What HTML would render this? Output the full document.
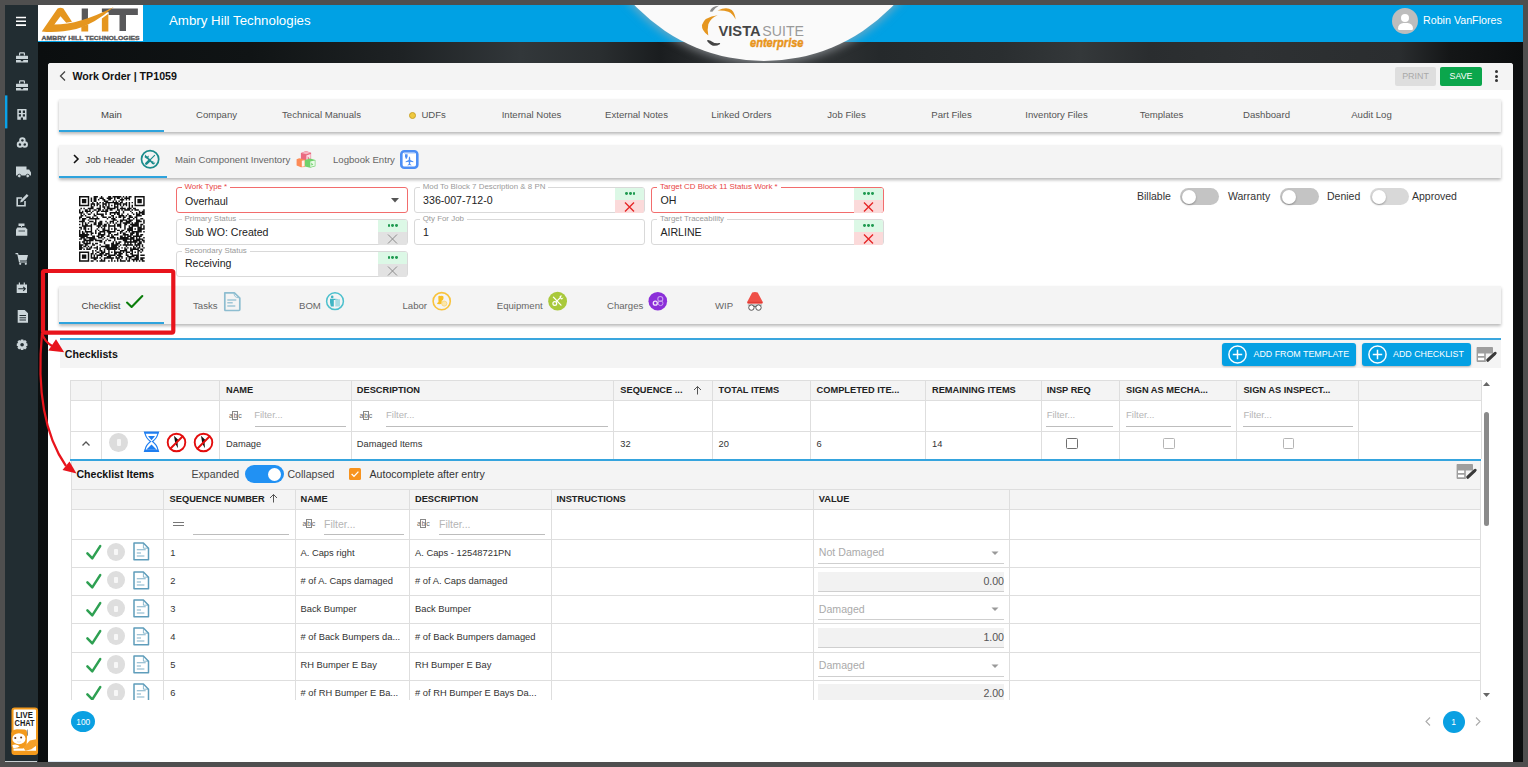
<!DOCTYPE html>
<html><head><meta charset="utf-8">
<style>
*{box-sizing:border-box;margin:0;padding:0}
html,body{width:1528px;height:767px;overflow:hidden;background:#4f4f4f;font-family:"Liberation Sans",sans-serif;color:#222}
.a{position:absolute}
.t{position:absolute;white-space:nowrap;line-height:1}
#side{left:5px;top:5px;width:33px;height:757px;background:#222d32}
#bg{left:38px;top:42px;width:1485px;height:720px;background:linear-gradient(90deg,#0b0e0f 0.0%,#101415 14.3%,#1e2224 24.4%,#32373a 32.5%,#2a2e30 37.8%,#1a1d1f 41.9%,#3a3d3f 48.6%,#25292b 56.7%,#2a2e30 64.8%,#34383a 70.2%,#2a2d2f 74.9%,#2e3133 81.6%,#2a2d2f 91.7%,#141617 95.1%,#0c0e0f 100.0%)}
#hdr{left:38px;top:5px;width:1485px;height:37px;background:#00a1e4}
#card{left:48px;top:63px;width:1465px;height:699px;background:#fff;border-radius:3px 3px 0 0}
.bar{position:absolute;background:#f4f4f4;box-shadow:0 2px 3px rgba(0,0,0,.28)}
.tab{position:absolute;top:0;height:100%;text-align:center;color:#555;font-size:9.6px}
.uline{position:absolute;height:2px;background:#2ea3dd}
</style></head><body>
<div id="side" class="a"></div>
<div id="hdr" class="a"></div>
<div id="bg" class="a"></div>
<div id="card" class="a"></div>

<!-- logo -->
<div class="a" style="left:38px;top:5px;width:105px;height:36px;background:#fff"></div>
<svg class="a" style="left:36px;top:3px" width="110" height="42" viewBox="0 0 1528 583">
 <path d="M635 75H722V228L635 240Z" fill="#58585a"/>
 <path d="M915 75H1415V165H1250V390H1160V165H1010V130H915Z" fill="#58585a"/>
 <path d="M630 330L725 300V395H630Z" fill="#e5961f"/>
 <path d="M915 215L1005 150V395H915Z" fill="#e5961f"/>
 <path d="M80 395L300 75Q340 55 380 75L500 260L420 275L340 185L255 300Q600 300 1080 55Q800 300 560 360Q300 420 80 395Z" fill="#e5961f"/>
 <text x="78" y="508" font-family="Liberation Sans" font-weight="bold" font-size="84" fill="#58585a" stroke="#58585a" stroke-width="5" textLength="1362" lengthAdjust="spacingAndGlyphs">AMBRY HILL TECHNOLOGIES</text>
</svg>
<div class="t" style="left:169px;top:14.1px;font-size:13.3px;color:#fff">Ambry Hill Technologies</div>
<!-- vista circle -->
<div class="a" style="left:38px;top:5px;width:1485px;height:70px;overflow:hidden"><div class="a" style="left:548px;top:-300px;width:356px;height:356px;border-radius:50%;background:#fafafa;box-shadow:0 1px 9px 2px rgba(170,175,180,.6)"></div></div>
<svg class="a" style="left:690px;top:5px" width="130" height="50" viewBox="0 0 1528 588">
 <path d="M325 120Q165 140 140 235Q135 300 215 360Q200 290 215 225Q245 150 325 120Z" fill="#e5961f"/>
 <path d="M325 65Q430 15 490 60Q530 100 535 170Q500 100 450 80Q390 60 325 65Z" fill="#e5961f"/>
 <path d="M232 75Q255 15 340 10Q290 35 262 80Z" fill="#8a8a8a"/>
 <path d="M210 420Q270 500 345 455Q290 470 230 425Z" fill="#444" stroke="#444" stroke-width="18" stroke-linejoin="round"/>
 <text x="335" y="360" font-family="Liberation Sans" font-weight="bold" font-size="172" fill="#454545" textLength="495" lengthAdjust="spacingAndGlyphs">VISTA</text>
 <text x="850" y="360" font-family="Liberation Sans" font-size="166" fill="#9a9a9a" textLength="490" lengthAdjust="spacingAndGlyphs">SUITE</text>
 <text x="705" y="490" font-family="Liberation Sans" font-weight="bold" font-style="italic" font-size="145" fill="#e8941a" stroke="#e8941a" stroke-width="5" textLength="630" lengthAdjust="spacingAndGlyphs">enterprise</text>
</svg>
<!-- avatar -->
<div class="a" style="left:1392px;top:7.6px;width:26px;height:26px;border-radius:50%;background:#bdbdbd;overflow:hidden">
 <div class="a" style="left:9px;top:6px;width:8px;height:8px;border-radius:50%;background:#fff"></div>
 <div class="a" style="left:5.5px;top:15.5px;width:15px;height:7px;border-radius:7px 7px 2px 2px;background:#fff"></div>
</div>
<div class="t" style="left:1423px;top:14.8px;font-size:10.7px;color:#fff">Robin VanFlores</div>
<!-- title bar -->
<div class="a" style="left:48px;top:63px;width:1465px;height:27px;background:#f4f4f4;border-radius:3px 3px 0 0"></div>
<svg class="a" style="left:58px;top:70px" width="10" height="12" viewBox="0 0 10 12"><path d="M7 1.5L2.5 6L7 10.5" fill="none" stroke="#444" stroke-width="1.3"/></svg>
<div class="t" style="left:72.4px;top:70.5px;font-size:10.65px;font-weight:bold;color:#111">Work Order | TP1059</div>
<div class="a" style="left:1395px;top:67px;width:41px;height:19px;background:#dedede;border-radius:2px"></div>
<div class="t" style="left:1395px;width:41px;text-align:center;top:71.6px;font-size:8.9px;color:#a9a9a9">PRINT</div>
<div class="a" style="left:1440px;top:67px;width:42px;height:19px;background:#0ba64c;border-radius:2px"></div>
<div class="t" style="left:1440px;width:42px;text-align:center;top:71.6px;font-size:8.9px;color:#fff">SAVE</div>
<div class="a" style="left:1495.2px;top:70.1px;width:3px;height:3px;border-radius:50%;background:#333"></div>
<div class="a" style="left:1495.2px;top:74.6px;width:3px;height:3px;border-radius:50%;background:#333"></div>
<div class="a" style="left:1495.2px;top:79.1px;width:3px;height:3px;border-radius:50%;background:#333"></div>

<!-- main tabs -->
<div class="bar" style="left:59px;top:99px;width:1442px;height:33px"></div>
<div class="t" style="left:59px;width:105px;text-align:center;top:109.8px;font-size:9.6px;color:#444">Main</div>
<div class="t" style="left:164px;width:105px;text-align:center;top:109.8px;font-size:9.6px;color:#555">Company</div>
<div class="t" style="left:269px;width:105px;text-align:center;top:109.8px;font-size:9.6px;color:#555">Technical Manuals</div>
<div class="a" style="left:408.5px;top:111.5px;width:7px;height:7px;border-radius:50%;background:#efc93f;border:1px solid #c9a22a"></div>
<div class="t" style="left:421.4px;top:109.8px;font-size:9.6px;color:#555">UDFs</div>
<div class="t" style="left:479px;width:105px;text-align:center;top:109.8px;font-size:9.6px;color:#555">Internal Notes</div>
<div class="t" style="left:584px;width:105px;text-align:center;top:109.8px;font-size:9.6px;color:#555">External Notes</div>
<div class="t" style="left:689px;width:105px;text-align:center;top:109.8px;font-size:9.6px;color:#555">Linked Orders</div>
<div class="t" style="left:794px;width:105px;text-align:center;top:109.8px;font-size:9.6px;color:#555">Job Files</div>
<div class="t" style="left:899px;width:105px;text-align:center;top:109.8px;font-size:9.6px;color:#555">Part Files</div>
<div class="t" style="left:1004px;width:105px;text-align:center;top:109.8px;font-size:9.6px;color:#555">Inventory Files</div>
<div class="t" style="left:1109px;width:105px;text-align:center;top:109.8px;font-size:9.6px;color:#555">Templates</div>
<div class="t" style="left:1214px;width:105px;text-align:center;top:109.8px;font-size:9.6px;color:#555">Dashboard</div>
<div class="t" style="left:1319px;width:105px;text-align:center;top:109.8px;font-size:9.6px;color:#555">Audit Log</div>
<div class="uline" style="left:59px;top:130px;width:105px"></div>

<!-- job header bar -->
<div class="bar" style="left:59px;top:145px;width:1442px;height:33px"></div>
<svg class="a" style="left:72px;top:154px" width="8" height="10" viewBox="0 0 8 10"><path d="M2 1L6 5L2 9" fill="none" stroke="#111" stroke-width="1.6"/></svg>
<div class="t" style="left:85.4px;top:154.9px;font-size:9.6px;color:#444">Job Header</div>
<svg class="a" style="left:140px;top:149px" width="20" height="20" viewBox="0 0 20 20">
 <circle cx="10.1" cy="10.3" r="8.6" fill="none" stroke="#1c8c8c" stroke-width="1.7"/>
 <path d="M6.8 8.3L12.6 14" stroke="#1c8c8c" stroke-width="1.7"/>
 <path d="M5.2 5.6L4.6 8.2L6.3 9.5L8.4 8.8L8.9 6.4L7.4 7.6L6.2 6.8Z" fill="#1c8c8c"/>
 <path d="M11.5 12.8L12 14.9L13.9 15.6L15.4 13.4L13.4 13.7L13.3 12Z" fill="#1c8c8c"/>
 <path d="M14.6 6.4L10.6 10.4" stroke="#1c8c8c" stroke-width="1.1" stroke-linecap="round"/>
 <path d="M9.8 11.2L6.3 14.6" stroke="#1c8c8c" stroke-width="2.6" stroke-linecap="round"/>
</svg>
<div class="t" style="left:175px;top:154.9px;font-size:9.6px;color:#666">Main Component Inventory</div>
<svg class="a" style="left:296px;top:150px" width="20" height="19" viewBox="0 0 20 19">
 <path d="M4.9 3L10 1L15.1 2.8V9.6L10.2 11.2L4.9 9.8Z" fill="#ea6a80"/>
 <path d="M5.5 2.9L10 1.3L14.6 2.8L10.2 4.3Z" fill="#f6b6c2"/>
 <path d="M10.4 5.5L14.6 4V9.3L10.4 10.7Z" fill="#fbe3e8"/>
 <path d="M11.7 6.2V9.2L13.5 8.5Z" fill="#ea6a80"/>
 <path d="M0.6 9.3L3.2 8.2L8.9 9.6V16.9L5 17.2L0.6 15.6Z" fill="#fc8b57"/>
 <path d="M5.8 10.8L8.6 10.3V16.3L5.8 16.8Z" fill="#fff1ea"/>
 <path d="M8.9 10L14 8.6L19.4 10V16.3L14.2 17.7L8.9 16.4Z" fill="#6fd16b"/>
 <path d="M14.3 11.5L18.8 10.4V15.8L14.3 17Z" fill="#eafbe8"/>
 <path d="M15.3 12.5V15.6L17.3 14.7Z" fill="#6fd16b"/>
</svg>
<div class="t" style="left:333px;top:154.9px;font-size:9.6px;color:#666">Logbook Entry</div>
<svg class="a" style="left:399px;top:149px" width="21" height="21" viewBox="0 0 21 21">
 <rect x="2.3" y="2.3" width="16" height="16.5" rx="3" fill="#fff" stroke="#4c8ef5" stroke-width="2.6"/>
 <path d="M5 4.2H16" stroke="#4c8ef5" stroke-width="1" opacity=".4"/>
 <path d="M6 5.2H8.6V7.5L7.8 9.8H6.8L6 7.5Z" fill="#4c8ef5"/>
 <path d="M10.5 7.3Q11.4 8.3 11.3 11L14.4 12.4V13.2L11.3 12.7L11.1 15L12.4 15.9V16.5L10.5 16.1L8.6 16.5V15.9L9.9 15L9.7 12.7L6.6 13.2V12.4L9.7 11Q9.6 8.3 10.5 7.3Z" fill="#4c8ef5"/>
</svg>
<div class="uline" style="left:59px;top:176px;width:108px"></div>
<svg class="a" style="left:79.3px;top:195.9px" width="65.7" height="65.8" viewBox="0 0 45 45"><path d="M0 0h7v1h-7zM10 0h3v1h-3zM15 0h1v1h-1zM20 0h2v1h-2zM23 0h6v1h-6zM30 0h1v1h-1zM32 0h1v1h-1zM34 0h2v1h-2zM38 0h7v1h-7zM0 1h1v1h-1zM6 1h1v1h-1zM8 1h1v1h-1zM10 1h2v1h-2zM14 1h3v1h-3zM19 1h4v1h-4zM24 1h1v1h-1zM26 1h2v1h-2zM29 1h1v1h-1zM31 1h4v1h-4zM38 1h1v1h-1zM44 1h1v1h-1zM0 2h1v1h-1zM2 2h3v1h-3zM6 2h1v1h-1zM8 2h1v1h-1zM10 2h2v1h-2zM13 2h1v1h-1zM16 2h2v1h-2zM20 2h2v1h-2zM24 2h1v1h-1zM28 2h3v1h-3zM32 2h1v1h-1zM34 2h1v1h-1zM38 2h1v1h-1zM40 2h3v1h-3zM44 2h1v1h-1zM0 3h1v1h-1zM2 3h3v1h-3zM6 3h1v1h-1zM8 3h1v1h-1zM10 3h2v1h-2zM17 3h3v1h-3zM23 3h1v1h-1zM25 3h1v1h-1zM27 3h1v1h-1zM29 3h1v1h-1zM38 3h1v1h-1zM40 3h3v1h-3zM44 3h1v1h-1zM0 4h1v1h-1zM2 4h3v1h-3zM6 4h1v1h-1zM9 4h1v1h-1zM12 4h1v1h-1zM14 4h1v1h-1zM16 4h1v1h-1zM18 4h9v1h-9zM28 4h2v1h-2zM32 4h1v1h-1zM34 4h1v1h-1zM36 4h1v1h-1zM38 4h1v1h-1zM40 4h3v1h-3zM44 4h1v1h-1zM0 5h1v1h-1zM6 5h1v1h-1zM8 5h3v1h-3zM12 5h2v1h-2zM16 5h3v1h-3zM20 5h1v1h-1zM24 5h5v1h-5zM30 5h3v1h-3zM34 5h1v1h-1zM38 5h1v1h-1zM44 5h1v1h-1zM0 6h7v1h-7zM8 6h1v1h-1zM10 6h1v1h-1zM12 6h1v1h-1zM14 6h1v1h-1zM16 6h1v1h-1zM18 6h1v1h-1zM20 6h1v1h-1zM22 6h1v1h-1zM24 6h1v1h-1zM26 6h1v1h-1zM28 6h1v1h-1zM30 6h1v1h-1zM32 6h1v1h-1zM34 6h1v1h-1zM36 6h1v1h-1zM38 6h7v1h-7zM8 7h2v1h-2zM14 7h1v1h-1zM16 7h2v1h-2zM19 7h2v1h-2zM24 7h3v1h-3zM29 7h1v1h-1zM34 7h1v1h-1zM36 7h1v1h-1zM1 8h1v1h-1zM3 8h1v1h-1zM6 8h4v1h-4zM12 8h3v1h-3zM17 8h1v1h-1zM19 8h6v1h-6zM26 8h1v1h-1zM28 8h4v1h-4zM33 8h3v1h-3zM37 8h2v1h-2zM0 9h1v1h-1zM4 9h2v1h-2zM7 9h1v1h-1zM10 9h2v1h-2zM13 9h2v1h-2zM16 9h1v1h-1zM18 9h2v1h-2zM21 9h2v1h-2zM26 9h2v1h-2zM29 9h1v1h-1zM31 9h4v1h-4zM36 9h1v1h-1zM38 9h3v1h-3zM44 9h1v1h-1zM0 10h1v1h-1zM2 10h1v1h-1zM4 10h4v1h-4zM9 10h1v1h-1zM12 10h2v1h-2zM15 10h5v1h-5zM25 10h1v1h-1zM27 10h1v1h-1zM30 10h1v1h-1zM35 10h1v1h-1zM41 10h1v1h-1zM43 10h2v1h-2zM0 11h3v1h-3zM5 11h1v1h-1zM8 11h1v1h-1zM12 11h1v1h-1zM18 11h1v1h-1zM21 11h7v1h-7zM30 11h1v1h-1zM36 11h1v1h-1zM39 11h1v1h-1zM41 11h4v1h-4zM1 12h1v1h-1zM3 12h1v1h-1zM6 12h2v1h-2zM10 12h1v1h-1zM12 12h5v1h-5zM18 12h1v1h-1zM21 12h1v1h-1zM24 12h1v1h-1zM26 12h2v1h-2zM29 12h1v1h-1zM33 12h1v1h-1zM37 12h1v1h-1zM39 12h3v1h-3zM43 12h2v1h-2zM1 13h2v1h-2zM4 13h1v1h-1zM10 13h2v1h-2zM15 13h2v1h-2zM22 13h2v1h-2zM27 13h4v1h-4zM32 13h1v1h-1zM34 13h2v1h-2zM39 13h4v1h-4zM0 14h2v1h-2zM5 14h3v1h-3zM9 14h1v1h-1zM12 14h1v1h-1zM16 14h3v1h-3zM20 14h2v1h-2zM23 14h1v1h-1zM25 14h1v1h-1zM27 14h2v1h-2zM30 14h2v1h-2zM34 14h3v1h-3zM38 14h2v1h-2zM0 15h1v1h-1zM2 15h3v1h-3zM7 15h7v1h-7zM19 15h1v1h-1zM22 15h3v1h-3zM30 15h1v1h-1zM33 15h2v1h-2zM37 15h1v1h-1zM39 15h1v1h-1zM42 15h2v1h-2zM2 16h2v1h-2zM6 16h1v1h-1zM11 16h1v1h-1zM23 16h3v1h-3zM28 16h5v1h-5zM34 16h3v1h-3zM39 16h3v1h-3zM44 16h1v1h-1zM0 17h4v1h-4zM7 17h3v1h-3zM11 17h1v1h-1zM14 17h2v1h-2zM18 17h1v1h-1zM21 17h3v1h-3zM26 17h1v1h-1zM28 17h2v1h-2zM32 17h4v1h-4zM39 17h4v1h-4zM44 17h1v1h-1zM2 18h1v1h-1zM4 18h1v1h-1zM6 18h1v1h-1zM10 18h2v1h-2zM13 18h3v1h-3zM19 18h1v1h-1zM21 18h1v1h-1zM23 18h1v1h-1zM25 18h1v1h-1zM28 18h1v1h-1zM30 18h5v1h-5zM36 18h1v1h-1zM38 18h3v1h-3zM44 18h1v1h-1zM0 19h1v1h-1zM2 19h1v1h-1zM4 19h2v1h-2zM8 19h1v1h-1zM10 19h2v1h-2zM13 19h3v1h-3zM17 19h2v1h-2zM20 19h1v1h-1zM24 19h1v1h-1zM26 19h3v1h-3zM31 19h2v1h-2zM35 19h6v1h-6zM42 19h2v1h-2zM2 20h7v1h-7zM12 20h3v1h-3zM16 20h3v1h-3zM20 20h5v1h-5zM26 20h3v1h-3zM31 20h1v1h-1zM34 20h1v1h-1zM36 20h5v1h-5zM42 20h1v1h-1zM44 20h1v1h-1zM0 21h2v1h-2zM3 21h2v1h-2zM8 21h1v1h-1zM13 21h1v1h-1zM15 21h1v1h-1zM17 21h1v1h-1zM20 21h1v1h-1zM24 21h1v1h-1zM28 21h1v1h-1zM31 21h1v1h-1zM34 21h3v1h-3zM40 21h3v1h-3zM44 21h1v1h-1zM1 22h1v1h-1zM3 22h2v1h-2zM6 22h1v1h-1zM8 22h1v1h-1zM12 22h1v1h-1zM16 22h2v1h-2zM20 22h1v1h-1zM22 22h1v1h-1zM24 22h2v1h-2zM31 22h1v1h-1zM33 22h4v1h-4zM38 22h1v1h-1zM40 22h5v1h-5zM0 23h1v1h-1zM4 23h1v1h-1zM8 23h1v1h-1zM11 23h1v1h-1zM13 23h1v1h-1zM16 23h5v1h-5zM24 23h1v1h-1zM26 23h2v1h-2zM29 23h2v1h-2zM33 23h4v1h-4zM40 23h3v1h-3zM0 24h1v1h-1zM2 24h1v1h-1zM4 24h5v1h-5zM11 24h1v1h-1zM14 24h4v1h-4zM19 24h6v1h-6zM28 24h2v1h-2zM32 24h1v1h-1zM34 24h1v1h-1zM36 24h7v1h-7zM44 24h1v1h-1zM0 25h1v1h-1zM2 25h2v1h-2zM5 25h1v1h-1zM8 25h2v1h-2zM11 25h1v1h-1zM13 25h2v1h-2zM17 25h1v1h-1zM20 25h2v1h-2zM26 25h1v1h-1zM28 25h1v1h-1zM30 25h2v1h-2zM35 25h3v1h-3zM39 25h2v1h-2zM0 26h7v1h-7zM8 26h1v1h-1zM13 26h5v1h-5zM20 26h1v1h-1zM22 26h1v1h-1zM24 26h3v1h-3zM30 26h4v1h-4zM35 26h2v1h-2zM39 26h2v1h-2zM42 26h2v1h-2zM0 27h6v1h-6zM9 27h2v1h-2zM12 27h2v1h-2zM15 27h2v1h-2zM19 27h2v1h-2zM22 27h2v1h-2zM28 27h2v1h-2zM31 27h1v1h-1zM33 27h3v1h-3zM37 27h6v1h-6zM1 28h3v1h-3zM5 28h6v1h-6zM13 28h3v1h-3zM17 28h1v1h-1zM21 28h4v1h-4zM26 28h1v1h-1zM28 28h6v1h-6zM35 28h3v1h-3zM39 28h1v1h-1zM41 28h1v1h-1zM44 28h1v1h-1zM0 29h2v1h-2zM3 29h2v1h-2zM7 29h5v1h-5zM16 29h1v1h-1zM19 29h1v1h-1zM24 29h1v1h-1zM26 29h12v1h-12zM39 29h5v1h-5zM3 30h7v1h-7zM11 30h5v1h-5zM18 30h1v1h-1zM20 30h2v1h-2zM24 30h1v1h-1zM30 30h3v1h-3zM35 30h1v1h-1zM37 30h5v1h-5zM43 30h2v1h-2zM0 31h1v1h-1zM2 31h2v1h-2zM5 31h1v1h-1zM7 31h1v1h-1zM14 31h2v1h-2zM17 31h1v1h-1zM23 31h1v1h-1zM25 31h1v1h-1zM27 31h2v1h-2zM31 31h9v1h-9zM41 31h2v1h-2zM44 31h1v1h-1zM0 32h1v1h-1zM3 32h5v1h-5zM9 32h1v1h-1zM11 32h2v1h-2zM17 32h1v1h-1zM22 32h2v1h-2zM25 32h3v1h-3zM31 32h1v1h-1zM33 32h1v1h-1zM35 32h1v1h-1zM38 32h1v1h-1zM40 32h3v1h-3zM0 33h3v1h-3zM4 33h2v1h-2zM9 33h2v1h-2zM14 33h1v1h-1zM18 33h3v1h-3zM22 33h5v1h-5zM28 33h1v1h-1zM30 33h7v1h-7zM38 33h4v1h-4zM43 33h1v1h-1zM0 34h2v1h-2zM3 34h2v1h-2zM6 34h1v1h-1zM8 34h1v1h-1zM12 34h1v1h-1zM15 34h6v1h-6zM22 34h4v1h-4zM27 34h1v1h-1zM32 34h1v1h-1zM37 34h1v1h-1zM39 34h1v1h-1zM41 34h1v1h-1zM43 34h1v1h-1zM0 35h3v1h-3zM5 35h1v1h-1zM7 35h2v1h-2zM10 35h3v1h-3zM14 35h1v1h-1zM18 35h9v1h-9zM29 35h1v1h-1zM31 35h1v1h-1zM33 35h1v1h-1zM35 35h1v1h-1zM37 35h2v1h-2zM40 35h2v1h-2zM44 35h1v1h-1zM0 36h2v1h-2zM3 36h1v1h-1zM5 36h3v1h-3zM12 36h1v1h-1zM14 36h1v1h-1zM17 36h1v1h-1zM19 36h7v1h-7zM27 36h1v1h-1zM31 36h2v1h-2zM35 36h6v1h-6zM42 36h2v1h-2zM9 37h1v1h-1zM11 37h1v1h-1zM14 37h2v1h-2zM17 37h1v1h-1zM20 37h1v1h-1zM24 37h1v1h-1zM28 37h5v1h-5zM35 37h2v1h-2zM40 37h2v1h-2zM43 37h1v1h-1zM0 38h7v1h-7zM9 38h1v1h-1zM12 38h2v1h-2zM15 38h3v1h-3zM20 38h1v1h-1zM22 38h1v1h-1zM24 38h5v1h-5zM30 38h1v1h-1zM32 38h3v1h-3zM36 38h1v1h-1zM38 38h1v1h-1zM40 38h1v1h-1zM42 38h1v1h-1zM0 39h1v1h-1zM6 39h1v1h-1zM8 39h2v1h-2zM11 39h1v1h-1zM14 39h3v1h-3zM18 39h3v1h-3zM24 39h2v1h-2zM27 39h3v1h-3zM32 39h1v1h-1zM35 39h2v1h-2zM40 39h1v1h-1zM0 40h1v1h-1zM2 40h3v1h-3zM6 40h1v1h-1zM8 40h1v1h-1zM10 40h1v1h-1zM12 40h4v1h-4zM17 40h2v1h-2zM20 40h5v1h-5zM26 40h3v1h-3zM32 40h2v1h-2zM36 40h5v1h-5zM42 40h3v1h-3zM0 41h1v1h-1zM2 41h3v1h-3zM6 41h1v1h-1zM8 41h1v1h-1zM10 41h1v1h-1zM12 41h1v1h-1zM15 41h1v1h-1zM19 41h3v1h-3zM25 41h1v1h-1zM27 41h3v1h-3zM33 41h5v1h-5zM39 41h2v1h-2zM0 42h1v1h-1zM2 42h3v1h-3zM6 42h1v1h-1zM8 42h5v1h-5zM14 42h1v1h-1zM17 42h7v1h-7zM25 42h3v1h-3zM29 42h1v1h-1zM32 42h1v1h-1zM34 42h2v1h-2zM38 42h3v1h-3zM42 42h3v1h-3zM0 43h1v1h-1zM6 43h1v1h-1zM10 43h2v1h-2zM15 43h1v1h-1zM17 43h1v1h-1zM22 43h1v1h-1zM26 43h1v1h-1zM28 43h1v1h-1zM32 43h1v1h-1zM34 43h1v1h-1zM36 43h5v1h-5zM42 43h2v1h-2zM0 44h7v1h-7zM8 44h2v1h-2zM12 44h1v1h-1zM14 44h4v1h-4zM20 44h1v1h-1zM22 44h1v1h-1zM24 44h1v1h-1zM26 44h1v1h-1zM28 44h4v1h-4zM33 44h2v1h-2zM37 44h1v1h-1zM39 44h1v1h-1zM41 44h1v1h-1zM43 44h2v1h-2z" fill="#111"/></svg>

<!-- fields -->
<div class="a" style="left:175.5px;top:187px;width:232.5px;height:26px;border:1px solid #f26d6d;border-radius:3px;background:#fff"></div>
<div class="t" style="left:181.5px;top:182.7px;font-size:7.9px;color:#e84545;background:#fff;padding:0 3px">Work Type *</div>
<div class="t" style="left:184.9px;top:195.5px;font-size:10.6px;color:#222">Overhaul</div>
<svg class="a" style="left:391.0px;top:198px" width="8" height="5" viewBox="0 0 8 5"><path d="M0 0H8L4 4.5Z" fill="#555"/></svg>
<div class="a" style="left:175.5px;top:219px;width:232.5px;height:26px;border:1px solid #d9d9d9;border-radius:3px;background:#fff"></div>
<div class="t" style="left:181.5px;top:214.7px;font-size:7.9px;color:#9a9a9a;background:#fff;padding:0 3px">Primary Status</div>
<div class="t" style="left:184.9px;top:226.8px;font-size:10.6px;color:#222">Sub WO: Created</div>
<div class="a" style="left:378.0px;top:219.5px;width:29px;height:12.5px;background:#dcf8e6;border-radius:0 2px 0 0"></div>
<div class="a" style="left:387.5px;top:224px;width:2.9px;height:2.9px;border-radius:50%;background:#1f9a50"></div>
<div class="a" style="left:391.3px;top:224px;width:2.9px;height:2.9px;border-radius:50%;background:#1f9a50"></div>
<div class="a" style="left:395.1px;top:224px;width:2.9px;height:2.9px;border-radius:50%;background:#1f9a50"></div>
<div class="a" style="left:378.0px;top:232px;width:29px;height:12.5px;background:#e2e2e2;border-radius:0 0 2px 2px"></div>
<svg class="a" style="left:387.0px;top:233.5px" width="11" height="10" viewBox="0 0 11 10"><path d="M1 0.5L10 9.5M10 0.5L1 9.5" stroke="#8a8a8a" stroke-width="1"/></svg>
<div class="a" style="left:175.5px;top:251px;width:232.5px;height:26px;border:1px solid #d9d9d9;border-radius:3px;background:#fff"></div>
<div class="t" style="left:181.5px;top:246.7px;font-size:7.9px;color:#9a9a9a;background:#fff;padding:0 3px">Secondary Status</div>
<div class="t" style="left:184.9px;top:257.9px;font-size:10.6px;color:#222">Receiving</div>
<div class="a" style="left:378.0px;top:251.5px;width:29px;height:12.5px;background:#dcf8e6;border-radius:0 2px 0 0"></div>
<div class="a" style="left:387.5px;top:256px;width:2.9px;height:2.9px;border-radius:50%;background:#1f9a50"></div>
<div class="a" style="left:391.3px;top:256px;width:2.9px;height:2.9px;border-radius:50%;background:#1f9a50"></div>
<div class="a" style="left:395.1px;top:256px;width:2.9px;height:2.9px;border-radius:50%;background:#1f9a50"></div>
<div class="a" style="left:378.0px;top:264px;width:29px;height:12.5px;background:#e2e2e2;border-radius:0 0 2px 2px"></div>
<svg class="a" style="left:387.0px;top:265.5px" width="11" height="10" viewBox="0 0 11 10"><path d="M1 0.5L10 9.5M10 0.5L1 9.5" stroke="#8a8a8a" stroke-width="1"/></svg>
<div class="a" style="left:413.7px;top:187.4px;width:231.7px;height:26px;border:1px solid #d9d9d9;border-radius:3px;background:#fff"></div>
<div class="t" style="left:419.7px;top:183.1px;font-size:7.9px;color:#9a9a9a;background:#fff;padding:0 3px">Mod To Block 7 Description &amp; 8 PN</div>
<div class="t" style="left:423.09999999999997px;top:195.4px;font-size:10.6px;color:#222">336-007-712-0</div>
<div class="a" style="left:615.4px;top:187.9px;width:29px;height:12.5px;background:#dcf8e6;border-radius:0 2px 0 0"></div>
<div class="a" style="left:624.9px;top:192.4px;width:2.9px;height:2.9px;border-radius:50%;background:#1f9a50"></div>
<div class="a" style="left:628.7px;top:192.4px;width:2.9px;height:2.9px;border-radius:50%;background:#1f9a50"></div>
<div class="a" style="left:632.5px;top:192.4px;width:2.9px;height:2.9px;border-radius:50%;background:#1f9a50"></div>
<div class="a" style="left:615.4px;top:200.4px;width:29px;height:12.5px;background:#fbdada;border-radius:0 0 2px 0"></div>
<svg class="a" style="left:624.4px;top:201.9px" width="11" height="10" viewBox="0 0 11 10"><path d="M1 0.5L10 9.5M10 0.5L1 9.5" stroke="#e52626" stroke-width="1.4"/></svg>
<div class="a" style="left:413.7px;top:219px;width:231.7px;height:26px;border:1px solid #d9d9d9;border-radius:3px;background:#fff"></div>
<div class="t" style="left:419.7px;top:214.7px;font-size:7.9px;color:#9a9a9a;background:#fff;padding:0 3px">Qty For Job</div>
<div class="t" style="left:423.09999999999997px;top:226.5px;font-size:10.6px;color:#222">1</div>
<div class="a" style="left:651px;top:187.4px;width:232.6px;height:26px;border:1px solid #f26d6d;border-radius:3px;background:#fff"></div>
<div class="t" style="left:657px;top:183.1px;font-size:7.9px;color:#e84545;background:#fff;padding:0 3px">Target CD Block 11 Status Work *</div>
<div class="t" style="left:660.4px;top:195.4px;font-size:10.6px;color:#222">OH</div>
<div class="a" style="left:853.6px;top:187.9px;width:29px;height:12.5px;background:#dcf8e6;border-radius:0 2px 0 0"></div>
<div class="a" style="left:863.1px;top:192.4px;width:2.9px;height:2.9px;border-radius:50%;background:#1f9a50"></div>
<div class="a" style="left:866.9px;top:192.4px;width:2.9px;height:2.9px;border-radius:50%;background:#1f9a50"></div>
<div class="a" style="left:870.7px;top:192.4px;width:2.9px;height:2.9px;border-radius:50%;background:#1f9a50"></div>
<div class="a" style="left:853.6px;top:200.4px;width:29px;height:12.5px;background:#fbdada;border-radius:0 0 2px 0"></div>
<svg class="a" style="left:862.6px;top:201.9px" width="11" height="10" viewBox="0 0 11 10"><path d="M1 0.5L10 9.5M10 0.5L1 9.5" stroke="#e52626" stroke-width="1.4"/></svg>
<div class="a" style="left:651px;top:219px;width:232.6px;height:26px;border:1px solid #d9d9d9;border-radius:3px;background:#fff"></div>
<div class="t" style="left:657px;top:214.7px;font-size:7.9px;color:#9a9a9a;background:#fff;padding:0 3px">Target Traceability</div>
<div class="t" style="left:660.4px;top:226.5px;font-size:10.6px;color:#222">AIRLINE</div>
<div class="a" style="left:853.6px;top:219.5px;width:29px;height:12.5px;background:#dcf8e6;border-radius:0 2px 0 0"></div>
<div class="a" style="left:863.1px;top:224px;width:2.9px;height:2.9px;border-radius:50%;background:#1f9a50"></div>
<div class="a" style="left:866.9px;top:224px;width:2.9px;height:2.9px;border-radius:50%;background:#1f9a50"></div>
<div class="a" style="left:870.7px;top:224px;width:2.9px;height:2.9px;border-radius:50%;background:#1f9a50"></div>
<div class="a" style="left:853.6px;top:232px;width:29px;height:12.5px;background:#fbdada;border-radius:0 0 2px 0"></div>
<svg class="a" style="left:862.6px;top:233.5px" width="11" height="10" viewBox="0 0 11 10"><path d="M1 0.5L10 9.5M10 0.5L1 9.5" stroke="#e52626" stroke-width="1.4"/></svg>
<div class="t" style="left:1137px;top:191.2px;font-size:10.5px;color:#333">Billable</div>
<div class="a" style="left:1180px;top:188px;width:39px;height:17px;border-radius:9px;background:#c4c4c4"></div>
<div class="a" style="left:1181.5px;top:189.5px;width:14px;height:14px;border-radius:50%;background:#fff;box-shadow:0 1px 2px rgba(0,0,0,.3)"></div>
<div class="t" style="left:1228px;top:191.2px;font-size:10.5px;color:#333">Warranty</div>
<div class="a" style="left:1280px;top:188px;width:39px;height:17px;border-radius:9px;background:#c4c4c4"></div>
<div class="a" style="left:1281.5px;top:189.5px;width:14px;height:14px;border-radius:50%;background:#fff;box-shadow:0 1px 2px rgba(0,0,0,.3)"></div>
<div class="t" style="left:1327px;top:191.2px;font-size:10.5px;color:#333">Denied</div>
<div class="a" style="left:1370px;top:188px;width:39px;height:17px;border-radius:9px;background:#d8d8d8"></div>
<div class="a" style="left:1371.5px;top:189.5px;width:14px;height:14px;border-radius:50%;background:#fff;box-shadow:0 1px 2px rgba(0,0,0,.3)"></div>
<div class="t" style="left:1412px;top:191.2px;font-size:10.5px;color:#333">Approved</div>

<!-- checklist tabs bar -->
<div class="bar" style="left:59px;top:286px;width:1442px;height:38px"></div>
<div class="t" style="left:81.6px;top:301.1px;font-size:9.6px;color:#444">Checklist</div>
<svg class="a" style="left:124px;top:293px" width="21" height="16" viewBox="0 0 21 16"><path d="M3 9.6L7.6 13.9L18.3 3" fill="none" stroke="#0b7d0b" stroke-width="2.1" stroke-linecap="round" stroke-linejoin="round"/></svg>
<div class="uline" style="left:59px;top:322px;width:105px"></div>
<div class="t" style="left:193px;top:301.1px;font-size:9.6px;color:#666">Tasks</div>
<svg class="a" style="left:222px;top:290px" width="20" height="22" viewBox="0 0 20 22">
 <path d="M2.8 2.8H12.4L17.8 8V19.6Q17.8 20.5 16.9 20.5H3.7Q2.8 20.5 2.8 19.6Z" fill="none" stroke="#8dbdd0" stroke-width="1.7" stroke-linejoin="round"/>
 <path d="M12 3.3Q12 7.6 16.8 7.8" fill="none" stroke="#8dbdd0" stroke-width="0.9"/>
 <path d="M5.3 9.9H14.3M5.3 12.8H10.7M5.3 16H13.3" stroke="#9fc6d6" stroke-width="1.5"/>
</svg>
<div class="t" style="left:299px;top:301.1px;font-size:9.6px;color:#666">BOM</div>
<svg class="a" style="left:325px;top:291px" width="20" height="20" viewBox="0 0 20 20">
 <circle cx="10" cy="10.2" r="8.4" fill="none" stroke="#4cc0cd" stroke-width="1.5"/>
 <circle cx="7.2" cy="5.9" r="1.3" fill="#3fb5c4"/>
 <path d="M5 7.8H8.8L12.8 8V8.9L8.8 9.1V15.5H5.8L5 11.5Z" fill="#3fb5c4"/>
 <path d="M10.3 8.2H15V15.5H10.3Z" fill="#a8dde4"/>
</svg>
<div class="t" style="left:402.5px;top:301.1px;font-size:9.6px;color:#666">Labor</div>
<svg class="a" style="left:432px;top:291px" width="20" height="20" viewBox="0 0 20 20">
 <circle cx="9.7" cy="10.2" r="8.6" fill="none" stroke="#f8c33d" stroke-width="1.6"/>
 <path d="M6.3 5.5Q7 4.5 8.7 5Q10 4.6 11.3 5.2Q12 7 11 9L9.7 9.8V12.8L7.7 13.3L5 12.9Q5.3 11.5 6.5 11Z" fill="#f8bf26"/>
 <circle cx="12.3" cy="12.6" r="2.6" fill="#fce7a9" stroke="#f8d16b" stroke-width=".7"/>
</svg>
<div class="t" style="left:496.8px;top:301.1px;font-size:9.6px;color:#666">Equipment</div>
<svg class="a" style="left:548px;top:291px" width="20" height="20" viewBox="0 0 20 20">
 <circle cx="9.6" cy="10.2" r="9.4" fill="#a9c93b"/>
 <path d="M5.4 6.1L13 14.1" stroke="#fff" stroke-width="1.3" stroke-linecap="round"/>
 <path d="M12.5 6.5L8.3 10.7" stroke="#fff" stroke-width="1.2"/>
 <path d="M11.5 5.5Q12 4 14 4.5L12.8 6.6L14.3 7.6L15.2 6Q15.5 8.5 13 8.5Z" fill="#fff"/>
 <circle cx="6.8" cy="12.5" r="1.9" fill="none" stroke="#fff" stroke-width="1.2"/>
</svg>
<div class="t" style="left:607px;top:301.1px;font-size:9.6px;color:#666">Charges</div>
<svg class="a" style="left:648px;top:291px" width="20" height="20" viewBox="0 0 20 20">
 <circle cx="9.8" cy="10.2" r="9.3" fill="#8b2fd9"/>
 <circle cx="12.3" cy="8" r="2.5" fill="none" stroke="#c9a2ee" stroke-width="1.1"/>
 <circle cx="12.6" cy="12.2" r="2.4" fill="none" stroke="#c9a2ee" stroke-width="1"/>
 <circle cx="7.3" cy="12.2" r="2" fill="none" stroke="#f2e6fb" stroke-width="1.3"/>
</svg>
<div class="t" style="left:715px;top:301.1px;font-size:9.6px;color:#666">WIP</div>
<svg class="a" style="left:745px;top:291px" width="20" height="22" viewBox="0 0 20 22">
 <path d="M7.2 1.6Q9.9 0.4 12.7 1.6L17.6 10.8Q18.3 12.7 16.6 12.7H3.4Q1.6 12.7 2.3 10.8Z" fill="#ef5048"/>
 <path d="M2.6 11.4H17.4" stroke="#e03c35" stroke-width="1.2"/>
 <path d="M2.8 14H17" stroke="#8a9a9a" stroke-width=".9"/>
 <circle cx="6.4" cy="16.6" r="2.7" fill="#fff" stroke="#555" stroke-width="1"/>
 <circle cx="13.5" cy="16.6" r="2.7" fill="#fff" stroke="#555" stroke-width="1"/>
 <path d="M9.1 15.6Q9.9 15 10.8 15.6" stroke="#555" stroke-width="1" fill="none"/>
</svg>
<!-- checklists section -->
<div class="a" style="left:60px;top:338px;width:1441px;height:2px;background:#3aa6de"></div>
<div class="a" style="left:60px;top:340px;width:1441px;height:28px;background:#f4f4f4"></div>
<div class="t" style="left:64.8px;top:349.2px;font-size:10.6px;font-weight:bold;color:#111">Checklists</div>
<div class="a" style="left:1222.4px;top:342.8px;width:134px;height:23px;background:#04a0e3;border-radius:3px;box-shadow:0 1px 2px rgba(0,0,0,.25)"></div>
<svg class="a" style="left:1227px;top:344px" width="21" height="21" viewBox="0 0 21 21"><circle cx="10.5" cy="10.5" r="8.6" fill="none" stroke="#fff" stroke-width="1.5"/><path d="M10.5 5.8V15.2M5.8 10.5H15.2" stroke="#fff" stroke-width="1.5"/></svg>
<div class="t" style="left:1253.5px;top:350.3px;font-size:8.87px;color:#fff">ADD FROM TEMPLATE</div>
<div class="a" style="left:1362px;top:342.8px;width:109px;height:23px;background:#04a0e3;border-radius:3px;box-shadow:0 1px 2px rgba(0,0,0,.25)"></div>
<svg class="a" style="left:1367px;top:344px" width="21" height="21" viewBox="0 0 21 21"><circle cx="10.5" cy="10.5" r="8.6" fill="none" stroke="#fff" stroke-width="1.5"/><path d="M10.5 5.8V15.2M5.8 10.5H15.2" stroke="#fff" stroke-width="1.5"/></svg>
<div class="t" style="left:1393px;top:350.3px;font-size:8.87px;color:#fff">ADD CHECKLIST</div>
<svg class="a" style="left:1476px;top:346px" width="22" height="17" viewBox="0 0 22 17">
 <path d="M1.2 1.1H16.2Q17 1.1 17 2V7.6H9.8V15.9H1.6Q0.6 15.9 0.6 15V2Q0.6 1.1 1.2 1.1Z" fill="#9e9e9e"/>
 <path d="M2 7.6H8.2V10H2ZM2 11.8H8.2V14.3H2Z" fill="#fff"/>
 <path d="M11.8 14.2L18.2 8.2" stroke="#3a3a3a" stroke-width="3.2" stroke-linecap="round"/>
 <path d="M18.6 7.8L19.4 7.1" stroke="#3a3a3a" stroke-width="2.6" stroke-linecap="round"/>
</svg>

<!-- table 1 -->
<div class="a" style="left:70px;top:380px;width:1411px;height:20.5px;background:#f4f4f4"></div>
<div class="a" style="left:70px;top:379.5px;width:1411px;height:1px;background:#dedede"></div>
<div class="a" style="left:70px;top:400.0px;width:1411px;height:1px;background:#dedede"></div>
<div class="a" style="left:70px;top:431.1px;width:1411px;height:1px;background:#dedede"></div>
<div class="a" style="left:69.5px;top:380px;width:1px;height:79px;background:#dedede"></div>
<div class="a" style="left:100.9px;top:380px;width:1px;height:79px;background:#dedede"></div>
<div class="a" style="left:218.9px;top:380px;width:1px;height:79px;background:#dedede"></div>
<div class="a" style="left:350.8px;top:380px;width:1px;height:79px;background:#dedede"></div>
<div class="a" style="left:612.5px;top:380px;width:1px;height:79px;background:#dedede"></div>
<div class="a" style="left:711.5px;top:380px;width:1px;height:79px;background:#dedede"></div>
<div class="a" style="left:809.5px;top:380px;width:1px;height:79px;background:#dedede"></div>
<div class="a" style="left:925.1px;top:380px;width:1px;height:79px;background:#dedede"></div>
<div class="a" style="left:1040.5px;top:380px;width:1px;height:79px;background:#dedede"></div>
<div class="a" style="left:1119.1px;top:380px;width:1px;height:79px;background:#dedede"></div>
<div class="a" style="left:1236.2px;top:380px;width:1px;height:79px;background:#dedede"></div>
<div class="a" style="left:1357.8px;top:380px;width:1px;height:79px;background:#dedede"></div>
<div class="a" style="left:1480.5px;top:380px;width:1px;height:79px;background:#dedede"></div>
<div class="t" style="left:226px;top:386.1px;font-size:9.25px;font-weight:bold;color:#222">NAME</div>
<div class="t" style="left:356.8px;top:386.1px;font-size:9.25px;font-weight:bold;color:#222">DESCRIPTION</div>
<div class="t" style="left:620.3px;top:386.1px;font-size:9.25px;font-weight:bold;color:#222">SEQUENCE ...</div>
<div class="t" style="left:718.5px;top:386.1px;font-size:9.25px;font-weight:bold;color:#222">TOTAL ITEMS</div>
<div class="t" style="left:816.6px;top:386.1px;font-size:9.25px;font-weight:bold;color:#222">COMPLETED ITE...</div>
<div class="t" style="left:932px;top:386.1px;font-size:9.25px;font-weight:bold;color:#222">REMAINING ITEMS</div>
<div class="t" style="left:1046.7px;top:386.1px;font-size:9.25px;font-weight:bold;color:#222">INSP REQ</div>
<div class="t" style="left:1126px;top:386.1px;font-size:9.25px;font-weight:bold;color:#222">SIGN AS MECHA...</div>
<div class="t" style="left:1243.4px;top:386.1px;font-size:9.25px;font-weight:bold;color:#222">SIGN AS INSPECT...</div>
<svg class="a" style="left:693px;top:385px" width="9" height="10" viewBox="0 0 9 10"><path d="M4.5 9.5V1.5M1 5L4.5 1.5L8 5" fill="none" stroke="#555" stroke-width="1"/></svg>
<div class="t" style="left:229px;top:412px;font-size:7px;color:#666;letter-spacing:-.6px">a<span style="border:1px solid #888;padding:0 .5px;font-size:6.5px">b</span>c</div>
<div class="t" style="left:254.2px;top:410.4px;font-size:9.5px;color:#b5b5b5">Filter...</div>
<div class="a" style="left:254.5px;top:425.5px;width:91px;height:1px;background:#bdbdbd"></div>
<div class="t" style="left:359.5px;top:412px;font-size:7px;color:#666;letter-spacing:-.6px">a<span style="border:1px solid #888;padding:0 .5px;font-size:6.5px">b</span>c</div>
<div class="t" style="left:386px;top:410.4px;font-size:9.5px;color:#b5b5b5">Filter...</div>
<div class="a" style="left:385.5px;top:425.5px;width:222.5px;height:1px;background:#bdbdbd"></div>
<div class="t" style="left:1046.7px;top:410.4px;font-size:9.5px;color:#b5b5b5">Filter...</div>
<div class="a" style="left:1046.2px;top:425.5px;width:66.7px;height:1px;background:#bdbdbd"></div>
<div class="t" style="left:1126px;top:410.4px;font-size:9.5px;color:#b5b5b5">Filter...</div>
<div class="a" style="left:1125.5px;top:425.5px;width:105.5px;height:1px;background:#bdbdbd"></div>
<div class="t" style="left:1243.4px;top:410.4px;font-size:9.5px;color:#b5b5b5">Filter...</div>
<div class="a" style="left:1242.9px;top:425.5px;width:110px;height:1px;background:#bdbdbd"></div>
<div class="t" style="left:226px;top:440.0px;font-size:9.3px;color:#333">Damage</div>
<div class="t" style="left:356.8px;top:440.0px;font-size:9.3px;color:#333">Damaged Items</div>
<div class="t" style="left:620.3px;top:440.0px;font-size:9.3px;color:#333">32</div>
<div class="t" style="left:718.5px;top:440.0px;font-size:9.3px;color:#333">20</div>
<div class="t" style="left:816.6px;top:440.0px;font-size:9.3px;color:#333">6</div>
<div class="t" style="left:932px;top:440.0px;font-size:9.3px;color:#333">14</div>
<div class="a" style="left:1066.0px;top:437.5px;width:11.5px;height:11.5px;border:1.2px solid #707070;border-radius:1.5px"></div>
<div class="a" style="left:1163.2px;top:437.5px;width:11.5px;height:11.5px;border:1.2px solid #b5b5b5;border-radius:1.5px"></div>
<div class="a" style="left:1282.7px;top:437.5px;width:11.5px;height:11.5px;border:1.2px solid #b5b5b5;border-radius:1.5px"></div>
<svg class="a" style="left:81px;top:440px" width="10" height="7" viewBox="0 0 10 7"><path d="M1.5 5.5L5 2L8.5 5.5" fill="none" stroke="#555" stroke-width="1.3"/></svg>
<div class="a" style="left:109px;top:432.7px;width:19px;height:19px;border-radius:50%;background:#dcdcdc"></div>
<div class="a" style="left:116.6px;top:438.5px;width:4px;height:7px;border-radius:1px;background:#f5f5f5"></div>
<svg class="a" style="left:143px;top:431px" width="17" height="22" viewBox="0 0 17 22">
 <path d="M1.5 1H15.5L14.8 3Q14 7 9.5 10.5Q14 14 14.8 18.5L15.5 20.5H1.5L2.2 18.5Q3 14 7.5 10.5Q3 7 2.2 3Z" fill="#fff" stroke="#1f7ef0" stroke-width="1.2"/>
 <path d="M1.8 1H15.2V2.8H1.8ZM1.8 18.8H15.2V20.6H1.8Z" fill="#1f7ef0"/>
 <path d="M5 5H12L8.5 9.2Z" fill="#1f7ef0"/>
 <path d="M8.5 13.5L13.8 18.8H3.2Z" fill="#1f7ef0"/>
</svg>
<svg class="a" style="left:166.3px;top:431.5px" width="21" height="21" viewBox="0 0 21 21">
 <circle cx="10.5" cy="10.5" r="8.8" fill="#fff" stroke="#e30d0d" stroke-width="1.9"/>
 <path d="M8 3.8L12.9 8.4L11.5 9.5L11.9 16.3L10.2 13.3L9 9.7Z" fill="#111"/>
 <path d="M16.5 4.5L4.5 16.5" stroke="#e30d0d" stroke-width="1.9"/>
</svg>
<svg class="a" style="left:192.7px;top:431.5px" width="21" height="21" viewBox="0 0 21 21">
 <circle cx="10.5" cy="10.5" r="8.8" fill="#fff" stroke="#e30d0d" stroke-width="1.9"/>
 <path d="M8 3.8L12.9 8.4L11.5 9.5L11.9 16.3L10.2 13.3L9 9.7Z" fill="#111"/>
 <path d="M16.5 4.5L4.5 16.5" stroke="#e30d0d" stroke-width="1.9"/>
</svg>
<div class="a" style="left:70px;top:458.5px;width:1411px;height:2.5px;background:#35a4de"></div>
<svg class="a" style="left:1482px;top:380px" width="9" height="8" viewBox="0 0 9 8"><path d="M1 6H8L4.5 2Z" fill="#666"/></svg>
<div class="a" style="left:1483.8px;top:412px;width:5.5px;height:114px;border-radius:3px;background:#8a8a8a"></div>
<svg class="a" style="left:1482px;top:691px" width="9" height="8" viewBox="0 0 9 8"><path d="M1 2H8L4.5 6Z" fill="#666"/></svg>

<!-- checklist items -->
<div class="a" style="left:71.5px;top:461px;width:1408.5px;height:48px;background:#f4f4f4"></div>
<div class="a" style="left:71.0px;top:461px;width:1px;height:239px;background:#dedede"></div>
<div class="a" style="left:1479.5px;top:461px;width:1px;height:239px;background:#dedede"></div>
<div class="t" style="left:76.4px;top:468.9px;font-size:10.6px;font-weight:bold;color:#111">Checklist Items</div>
<div class="t" style="left:191.5px;top:468.8px;font-size:10.6px;color:#444">Expanded</div>
<div class="a" style="left:244.5px;top:465.2px;width:39.2px;height:17.4px;border-radius:9px;background:#2191f3"></div>
<div class="a" style="left:267.5px;top:467.5px;width:13px;height:13px;border-radius:50%;background:#fff"></div>
<div class="t" style="left:287.4px;top:468.8px;font-size:10.6px;color:#444">Collapsed</div>
<div class="a" style="left:349.2px;top:468.4px;width:12px;height:11.5px;border-radius:1.5px;background:#f7931e"></div>
<svg class="a" style="left:349.2px;top:468.4px" width="12" height="12" viewBox="0 0 12 12"><path d="M2.6 6L5 8.4L9.4 3.6" fill="none" stroke="#fff" stroke-width="1.3"/></svg>
<div class="t" style="left:369.5px;top:468.8px;font-size:10.6px;color:#333">Autocomplete after entry</div>
<svg class="a" style="left:1456px;top:463px" width="22" height="17" viewBox="0 0 22 17">
 <path d="M1.2 1.1H16.2Q17 1.1 17 2V7.6H9.8V15.9H1.6Q0.6 15.9 0.6 15V2Q0.6 1.1 1.2 1.1Z" fill="#9e9e9e"/>
 <path d="M2 7.6H8.2V10H2ZM2 11.8H8.2V14.3H2Z" fill="#fff"/>
 <path d="M11.8 14.2L18.2 8.2" stroke="#3a3a3a" stroke-width="3.2" stroke-linecap="round"/>
 <path d="M18.6 7.8L19.4 7.1" stroke="#3a3a3a" stroke-width="2.6" stroke-linecap="round"/>
</svg>
<div class="a" style="left:71.5px;top:509px;width:1408.5px;height:191px;background:#fff"></div>
<div class="a" style="left:71.5px;top:488.5px;width:1408.5px;height:1px;background:#dedede"></div>
<div class="a" style="left:71.5px;top:508.5px;width:1408.5px;height:1px;background:#dedede"></div>
<div class="a" style="left:71.5px;top:538.9px;width:1408.5px;height:1px;background:#dedede"></div>
<div class="a" style="left:71.5px;top:567.0px;width:1408.5px;height:1px;background:#dedede"></div>
<div class="a" style="left:71.5px;top:595.2px;width:1408.5px;height:1px;background:#dedede"></div>
<div class="a" style="left:71.5px;top:623.3px;width:1408.5px;height:1px;background:#dedede"></div>
<div class="a" style="left:71.5px;top:651.5px;width:1408.5px;height:1px;background:#dedede"></div>
<div class="a" style="left:71.5px;top:679.6px;width:1408.5px;height:1px;background:#dedede"></div>
<div class="a" style="left:163.2px;top:489px;width:1px;height:211px;background:#dedede"></div>
<div class="a" style="left:294.5px;top:489px;width:1px;height:211px;background:#dedede"></div>
<div class="a" style="left:409.0px;top:489px;width:1px;height:211px;background:#dedede"></div>
<div class="a" style="left:550.5px;top:489px;width:1px;height:211px;background:#dedede"></div>
<div class="a" style="left:812.7px;top:489px;width:1px;height:211px;background:#dedede"></div>
<div class="a" style="left:1009.1px;top:489px;width:1px;height:211px;background:#dedede"></div>
<div class="t" style="left:169.6px;top:494.6px;font-size:9.25px;font-weight:bold;color:#222">SEQUENCE NUMBER</div>
<div class="t" style="left:300.5px;top:494.6px;font-size:9.25px;font-weight:bold;color:#222">NAME</div>
<div class="t" style="left:415px;top:494.6px;font-size:9.25px;font-weight:bold;color:#222">DESCRIPTION</div>
<div class="t" style="left:556.4px;top:494.6px;font-size:9.25px;font-weight:bold;color:#222">INSTRUCTIONS</div>
<div class="t" style="left:818.8px;top:494.6px;font-size:9.25px;font-weight:bold;color:#222">VALUE</div>
<svg class="a" style="left:269px;top:493px" width="9" height="10" viewBox="0 0 9 10"><path d="M4.5 9.5V1.5M1 5L4.5 1.5L8 5" fill="none" stroke="#555" stroke-width="1"/></svg>
<div class="a" style="left:173px;top:521.5px;width:11px;height:1.2px;background:#777"></div><div class="a" style="left:173px;top:524.5px;width:11px;height:1.2px;background:#777"></div>
<div class="a" style="left:192.5px;top:533.7px;width:96px;height:1px;background:#bdbdbd"></div>
<div class="t" style="left:302.5px;top:519.5px;font-size:7px;color:#666;letter-spacing:-.6px">a<span style="border:1px solid #888;padding:0 .5px;font-size:6.5px">b</span>c</div>
<div class="t" style="left:324px;top:519.1px;font-size:10.5px;color:#b5b5b5">Filter...</div>
<div class="a" style="left:324px;top:533.7px;width:80px;height:1px;background:#bdbdbd"></div>
<div class="t" style="left:417px;top:519.5px;font-size:7px;color:#666;letter-spacing:-.6px">a<span style="border:1px solid #888;padding:0 .5px;font-size:6.5px">b</span>c</div>
<div class="t" style="left:439px;top:519.1px;font-size:10.5px;color:#b5b5b5">Filter...</div>
<div class="a" style="left:439px;top:533.7px;width:105.5px;height:1px;background:#bdbdbd"></div>
<div class="a" style="left:0;top:0;width:1528px;height:699.6px;overflow:hidden">
<svg class="a" style="left:84px;top:539.4px" width="20" height="24" viewBox="0 0 20 24"><path d="M3.4 14.3L8.3 19.4L16.2 7.1" fill="none" stroke="#2ea052" stroke-width="2.5" stroke-linecap="round" stroke-linejoin="round"/></svg>
<div class="a" style="left:107px;top:542.6px;width:18.4px;height:18.4px;border-radius:50%;background:#dedede"></div>
<div class="a" style="left:114.1px;top:549.2px;width:4.2px;height:6px;border-radius:1px;background:#f7f7f7"></div>
<svg class="a" style="left:132px;top:541.4px" width="19" height="21" viewBox="0 0 19 21"><path d="M2 2H11.4L16.5 7.2V18.8H2Z" fill="#fff" stroke="#5f9dbb" stroke-width="1.5" stroke-linejoin="round"/><path d="M11.4 2V7.2H16.5" fill="none" stroke="#5f9dbb" stroke-width="0.7"/><path d="M4.8 8.7H13.7M4.8 12H9M4.8 15H12.4" stroke="#7fb0c8" stroke-width="1.1"/></svg>
<div class="t" style="left:170.3px;top:548.5px;font-size:9.35px;color:#333">1</div>
<div class="t" style="left:300.5px;top:548.5px;font-size:9.35px;color:#333">A. Caps right</div>
<div class="t" style="left:415px;top:548.5px;font-size:9.35px;color:#333">A. Caps - 12548721PN</div>
<div class="t" style="left:818.8px;top:547.4px;font-size:10.6px;color:#aaa">Not Damaged</div>
<svg class="a" style="left:991px;top:550.9px" width="8" height="5" viewBox="0 0 8 5"><path d="M0.5 0.5H7.5L4 4Z" fill="#999"/></svg>
<div class="a" style="left:818px;top:563.0px;width:186px;height:1px;background:#cfcfcf"></div>
<svg class="a" style="left:84px;top:567.5px" width="20" height="24" viewBox="0 0 20 24"><path d="M3.4 14.3L8.3 19.4L16.2 7.1" fill="none" stroke="#2ea052" stroke-width="2.5" stroke-linecap="round" stroke-linejoin="round"/></svg>
<div class="a" style="left:107px;top:570.7px;width:18.4px;height:18.4px;border-radius:50%;background:#dedede"></div>
<div class="a" style="left:114.1px;top:577.3px;width:4.2px;height:6px;border-radius:1px;background:#f7f7f7"></div>
<svg class="a" style="left:132px;top:569.5px" width="19" height="21" viewBox="0 0 19 21"><path d="M2 2H11.4L16.5 7.2V18.8H2Z" fill="#fff" stroke="#5f9dbb" stroke-width="1.5" stroke-linejoin="round"/><path d="M11.4 2V7.2H16.5" fill="none" stroke="#5f9dbb" stroke-width="0.7"/><path d="M4.8 8.7H13.7M4.8 12H9M4.8 15H12.4" stroke="#7fb0c8" stroke-width="1.1"/></svg>
<div class="t" style="left:170.3px;top:576.6px;font-size:9.35px;color:#333">2</div>
<div class="t" style="left:300.5px;top:576.6px;font-size:9.35px;color:#333"># of A. Caps damaged</div>
<div class="t" style="left:415px;top:576.6px;font-size:9.35px;color:#333"># of A. Caps damaged</div>
<div class="a" style="left:818px;top:571.5px;width:186px;height:20px;background:#f2f2f2;border-bottom:1px solid #cfcfcf"></div>
<div class="t" style="left:818px;width:186px;text-align:right;top:575.5px;font-size:10.6px;color:#555">0.00</div>
<svg class="a" style="left:84px;top:595.7px" width="20" height="24" viewBox="0 0 20 24"><path d="M3.4 14.3L8.3 19.4L16.2 7.1" fill="none" stroke="#2ea052" stroke-width="2.5" stroke-linecap="round" stroke-linejoin="round"/></svg>
<div class="a" style="left:107px;top:598.9px;width:18.4px;height:18.4px;border-radius:50%;background:#dedede"></div>
<div class="a" style="left:114.1px;top:605.5px;width:4.2px;height:6px;border-radius:1px;background:#f7f7f7"></div>
<svg class="a" style="left:132px;top:597.7px" width="19" height="21" viewBox="0 0 19 21"><path d="M2 2H11.4L16.5 7.2V18.8H2Z" fill="#fff" stroke="#5f9dbb" stroke-width="1.5" stroke-linejoin="round"/><path d="M11.4 2V7.2H16.5" fill="none" stroke="#5f9dbb" stroke-width="0.7"/><path d="M4.8 8.7H13.7M4.8 12H9M4.8 15H12.4" stroke="#7fb0c8" stroke-width="1.1"/></svg>
<div class="t" style="left:170.3px;top:604.8px;font-size:9.35px;color:#333">3</div>
<div class="t" style="left:300.5px;top:604.8px;font-size:9.35px;color:#333">Back Bumper</div>
<div class="t" style="left:415px;top:604.8px;font-size:9.35px;color:#333">Back Bumper</div>
<div class="t" style="left:818.8px;top:603.7px;font-size:10.6px;color:#aaa">Damaged</div>
<svg class="a" style="left:991px;top:607.2px" width="8" height="5" viewBox="0 0 8 5"><path d="M0.5 0.5H7.5L4 4Z" fill="#999"/></svg>
<div class="a" style="left:818px;top:619.3px;width:186px;height:1px;background:#cfcfcf"></div>
<svg class="a" style="left:84px;top:623.8px" width="20" height="24" viewBox="0 0 20 24"><path d="M3.4 14.3L8.3 19.4L16.2 7.1" fill="none" stroke="#2ea052" stroke-width="2.5" stroke-linecap="round" stroke-linejoin="round"/></svg>
<div class="a" style="left:107px;top:627.0px;width:18.4px;height:18.4px;border-radius:50%;background:#dedede"></div>
<div class="a" style="left:114.1px;top:633.6px;width:4.2px;height:6px;border-radius:1px;background:#f7f7f7"></div>
<svg class="a" style="left:132px;top:625.8px" width="19" height="21" viewBox="0 0 19 21"><path d="M2 2H11.4L16.5 7.2V18.8H2Z" fill="#fff" stroke="#5f9dbb" stroke-width="1.5" stroke-linejoin="round"/><path d="M11.4 2V7.2H16.5" fill="none" stroke="#5f9dbb" stroke-width="0.7"/><path d="M4.8 8.7H13.7M4.8 12H9M4.8 15H12.4" stroke="#7fb0c8" stroke-width="1.1"/></svg>
<div class="t" style="left:170.3px;top:632.9px;font-size:9.35px;color:#333">4</div>
<div class="t" style="left:300.5px;top:632.9px;font-size:9.35px;color:#333"># of Back Bumpers da...</div>
<div class="t" style="left:415px;top:632.9px;font-size:9.35px;color:#333"># of Back Bumpers damaged</div>
<div class="a" style="left:818px;top:627.8px;width:186px;height:20px;background:#f2f2f2;border-bottom:1px solid #cfcfcf"></div>
<div class="t" style="left:818px;width:186px;text-align:right;top:631.8px;font-size:10.6px;color:#555">1.00</div>
<svg class="a" style="left:84px;top:652.0px" width="20" height="24" viewBox="0 0 20 24"><path d="M3.4 14.3L8.3 19.4L16.2 7.1" fill="none" stroke="#2ea052" stroke-width="2.5" stroke-linecap="round" stroke-linejoin="round"/></svg>
<div class="a" style="left:107px;top:655.2px;width:18.4px;height:18.4px;border-radius:50%;background:#dedede"></div>
<div class="a" style="left:114.1px;top:661.8px;width:4.2px;height:6px;border-radius:1px;background:#f7f7f7"></div>
<svg class="a" style="left:132px;top:654.0px" width="19" height="21" viewBox="0 0 19 21"><path d="M2 2H11.4L16.5 7.2V18.8H2Z" fill="#fff" stroke="#5f9dbb" stroke-width="1.5" stroke-linejoin="round"/><path d="M11.4 2V7.2H16.5" fill="none" stroke="#5f9dbb" stroke-width="0.7"/><path d="M4.8 8.7H13.7M4.8 12H9M4.8 15H12.4" stroke="#7fb0c8" stroke-width="1.1"/></svg>
<div class="t" style="left:170.3px;top:661.1px;font-size:9.35px;color:#333">5</div>
<div class="t" style="left:300.5px;top:661.1px;font-size:9.35px;color:#333">RH Bumper E Bay</div>
<div class="t" style="left:415px;top:661.1px;font-size:9.35px;color:#333">RH Bumper E Bay</div>
<div class="t" style="left:818.8px;top:660.0px;font-size:10.6px;color:#aaa">Damaged</div>
<svg class="a" style="left:991px;top:663.5px" width="8" height="5" viewBox="0 0 8 5"><path d="M0.5 0.5H7.5L4 4Z" fill="#999"/></svg>
<div class="a" style="left:818px;top:675.6px;width:186px;height:1px;background:#cfcfcf"></div>
<svg class="a" style="left:84px;top:680.1px" width="20" height="24" viewBox="0 0 20 24"><path d="M3.4 14.3L8.3 19.4L16.2 7.1" fill="none" stroke="#2ea052" stroke-width="2.5" stroke-linecap="round" stroke-linejoin="round"/></svg>
<div class="a" style="left:107px;top:683.3px;width:18.4px;height:18.4px;border-radius:50%;background:#dedede"></div>
<div class="a" style="left:114.1px;top:689.9px;width:4.2px;height:6px;border-radius:1px;background:#f7f7f7"></div>
<svg class="a" style="left:132px;top:682.1px" width="19" height="21" viewBox="0 0 19 21"><path d="M2 2H11.4L16.5 7.2V18.8H2Z" fill="#fff" stroke="#5f9dbb" stroke-width="1.5" stroke-linejoin="round"/><path d="M11.4 2V7.2H16.5" fill="none" stroke="#5f9dbb" stroke-width="0.7"/><path d="M4.8 8.7H13.7M4.8 12H9M4.8 15H12.4" stroke="#7fb0c8" stroke-width="1.1"/></svg>
<div class="t" style="left:170.3px;top:689.2px;font-size:9.35px;color:#333">6</div>
<div class="t" style="left:300.5px;top:689.2px;font-size:9.35px;color:#333"># of RH Bumper E Ba...</div>
<div class="t" style="left:415px;top:689.2px;font-size:9.35px;color:#333"># of RH Bumper E Bays Da...</div>
<div class="a" style="left:818px;top:684.1px;width:186px;height:20px;background:#f2f2f2;border-bottom:1px solid #cfcfcf"></div>
<div class="t" style="left:818px;width:186px;text-align:right;top:688.1px;font-size:10.6px;color:#555">2.00</div>
<svg class="a" style="left:84px;top:708.3px" width="20" height="24" viewBox="0 0 20 24"><path d="M3.4 14.3L8.3 19.4L16.2 7.1" fill="none" stroke="#2ea052" stroke-width="2.5" stroke-linecap="round" stroke-linejoin="round"/></svg>
<div class="a" style="left:107px;top:711.5px;width:18.4px;height:18.4px;border-radius:50%;background:#dedede"></div>
<div class="a" style="left:114.1px;top:718.1px;width:4.2px;height:6px;border-radius:1px;background:#f7f7f7"></div>
<svg class="a" style="left:132px;top:710.3px" width="19" height="21" viewBox="0 0 19 21"><path d="M2 2H11.4L16.5 7.2V18.8H2Z" fill="#fff" stroke="#5f9dbb" stroke-width="1.5" stroke-linejoin="round"/><path d="M11.4 2V7.2H16.5" fill="none" stroke="#5f9dbb" stroke-width="0.7"/><path d="M4.8 8.7H13.7M4.8 12H9M4.8 15H12.4" stroke="#7fb0c8" stroke-width="1.1"/></svg>
<div class="t" style="left:170.3px;top:717.4px;font-size:9.35px;color:#333">7</div>
<div class="t" style="left:300.5px;top:717.4px;font-size:9.35px;color:#333">Front Bumper</div>
<div class="t" style="left:415px;top:717.4px;font-size:9.35px;color:#333">Front Bumper</div>
<div class="t" style="left:818.8px;top:716.3px;font-size:10.6px;color:#aaa">Damaged</div>
<svg class="a" style="left:991px;top:719.8px" width="8" height="5" viewBox="0 0 8 5"><path d="M0.5 0.5H7.5L4 4Z" fill="#999"/></svg>
<div class="a" style="left:818px;top:731.9px;width:186px;height:1px;background:#cfcfcf"></div>
</div>
<div class="a" style="left:71.3px;top:710.6px;width:23.8px;height:21px;border-radius:50%;background:#0aa0e2"></div>
<div class="t" style="left:71.3px;width:23.8px;text-align:center;top:717.5px;font-size:8.3px;color:#fff">100</div>
<svg class="a" style="left:1424px;top:716px" width="8" height="11" viewBox="0 0 8 11"><path d="M6 1.5L2 5.5L6 9.5" fill="none" stroke="#aaa" stroke-width="1.1"/></svg>
<div class="a" style="left:1442.6px;top:710.5px;width:22px;height:22px;border-radius:50%;background:#0aa0e2"></div>
<div class="t" style="left:1442.6px;width:22px;text-align:center;top:717.5px;font-size:8.5px;color:#fff">1</div>
<svg class="a" style="left:1474px;top:716px" width="8" height="11" viewBox="0 0 8 11"><path d="M2 1.5L6 5.5L2 9.5" fill="none" stroke="#aaa" stroke-width="1.1"/></svg>

<!-- sidebar icons -->
<svg class="a" style="left:5px;top:5px" width="33" height="360" viewBox="0 0 33 360">
 <path d="M11 12.5H21M11 16.3H21M11 20.1H21" stroke="#fff" stroke-width="1.6"/>
 <g fill="#cbd5d9">
  <path d="M14 50.5V48.5Q14 47.3 15.2 47.3H18.8Q20 47.3 20 48.5V50.5H18.8V48.6H15.2V50.5Z"/>
  <path d="M11.3 50.8H22.7Q23 50.8 23 51.2V54H11V51.2Q11 50.8 11.3 50.8ZM11 55.1H15.8V56.2H18.2V55.1H23V57.2Q23 57.6 22.6 57.6H11.4Q11 57.6 11 57.2Z"/>
  <path d="M14 78.5V76.5Q14 75.3 15.2 75.3H18.8Q20 75.3 20 76.5V78.5H18.8V76.6H15.2V78.5Z"/>
  <path d="M11.3 78.8H22.7Q23 78.8 23 79.2V82H11V79.2Q11 78.8 11.3 78.8ZM11 83.1H15.8V84.2H18.2V83.1H23V85.2Q23 85.6 22.6 85.6H11.4Q11 85.6 11 85.2Z"/>
  <path d="M12.3 104H21.5V114.8H12.3ZM13.8 105.5V108H16V105.5ZM17.8 105.5V108H20V105.5ZM13.8 109.2V111.5H16V109.2ZM17.8 109.2V111.5H20V109.2ZM15.8 112.5V114.8H18V112.5Z" fill-rule="evenodd"/>
 </g>
 <rect x="0" y="90.4" width="2.4" height="33" fill="#0aa2e8"/>
 <g fill="none" stroke="#cbd5d9" stroke-width="1.9">
  <circle cx="15" cy="139.5" r="2.3"/><circle cx="19.7" cy="139.5" r="2.3"/><circle cx="17.4" cy="135.5" r="2.3"/>
 </g>
 <g fill="#cbd5d9">
  <path d="M11 161.5H21.5V164.5H24.2L26 167.5V170.5H11Z"/>
  <circle cx="14.3" cy="171" r="1.8" stroke="#222d32" stroke-width=".8"/><circle cx="22.7" cy="171" r="1.8" stroke="#222d32" stroke-width=".8"/>
 </g>
 <path d="M17 193H12.2V200.8H20V196" fill="none" stroke="#cbd5d9" stroke-width="1.6"/>
 <path d="M15.2 197.5L15.8 195L21.8 189L23.5 190.7L17.5 196.7Z" fill="#cbd5d9"/>
 <g fill="#cbd5d9">
  <path d="M13.5 218.5H19.5V221H13.5Z"/><path d="M16 221H17V222H16Z"/>
  <path d="M12.3 222.5H20.5L22.3 224.5V230.7H11V224.5Z"/>
 </g>
 <path d="M13.5 226H20" stroke="#222d32" stroke-width=".8"/>
 <g fill="#cbd5d9">
  <path d="M10.5 248H13L13.6 250H23L21.6 255.5H14.8L15 256.5H22V257.5H14L12.3 249.3H10.5Z"/>
  <circle cx="15.2" cy="258.8" r="1.1"/><circle cx="20.8" cy="258.8" r="1.1"/>
  <path d="M11.7 279.5H22V288H11.7ZM13.8 277.5H15V279.5H13.8ZM18.7 277.5H19.9V279.5H18.7Z"/>
 </g>
 <path d="M13.3 283.8H20.3M18.2 281.8L20.3 283.8L18.2 285.8" fill="none" stroke="#222d32" stroke-width="1.1"/>
 <path d="M12.7 305H19.7L23 308.3V317.8H12.7Z" fill="#cbd5d9"/>
 <path d="M14.5 310.5H21M14.5 312.8H21M14.5 315H21" stroke="#222d32" stroke-width="1"/>
 <g transform="translate(17.1 339.7)">
  <path d="M-1.2 -5.3H1.2L1.6 -3.9L3 -4.7L4.7 -3L3.9 -1.6L5.3 -1.2V1.2L3.9 1.6L4.7 3L3 4.7L1.6 3.9L1.2 5.3H-1.2L-1.6 3.9L-3 4.7L-4.7 3L-3.9 1.6L-5.3 1.2V-1.2L-3.9 -1.6L-4.7 -3L-3 -4.7L-1.6 -3.9Z" fill="#cbd5d9"/>
  <circle r="1.8" fill="#253035"/>
 </g>
</svg>
<!-- live chat -->
<svg class="a" style="left:8px;top:704px" width="34" height="56" viewBox="0 0 466 767">
 <rect x="62" y="62" width="336" height="622" rx="28" fill="#fff" stroke="#f39a1c" stroke-width="28"/>
 <text x="105" y="190" font-family="Liberation Sans" font-weight="bold" font-size="118" fill="#1a1a1a" textLength="235" lengthAdjust="spacingAndGlyphs">LIVE</text>
 <text x="90" y="305" font-family="Liberation Sans" font-weight="bold" font-size="118" fill="#1a1a1a" textLength="275" lengthAdjust="spacingAndGlyphs">CHAT</text>
 <path d="M255 360L270 345L275 430L250 440Z" fill="#888"/>
 <path d="M45 400Q50 350 120 345L230 350Q265 360 262 420L255 560Q240 610 170 610H80Q45 600 45 550Z" fill="#f39a1c"/>
 <ellipse cx="150" cy="475" rx="90" ry="75" fill="#fff"/>
 <circle cx="100" cy="465" r="14" fill="#6a3a1a"/><circle cx="180" cy="460" r="14" fill="#6a3a1a"/>
 <path d="M125 515Q150 530 175 515" stroke="#ccc" stroke-width="8" fill="none"/>
 <path d="M210 600L300 500L400 480L400 560L320 620L240 640Z" fill="#f6a12a"/>
 <path d="M60 560Q120 540 160 580Q130 610 70 600Z" fill="#fff"/>
 <path d="M62 640H398V670Q398 684 384 684H76Q62 684 62 670Z" fill="#f39a1c"/>
</svg>
<div class="a" style="left:5px;top:760.5px;width:32px;height:1.5px;background:#c9d0d3"></div>
<div class="a" style="left:48px;top:760.5px;width:102px;height:1.5px;background:#dfe8f5"></div>
<!-- annotations -->
<svg class="a" style="left:0;top:0" width="1528" height="767" viewBox="0 0 1528 767">
 <rect x="43" y="271" width="130.3" height="61.6" rx="1.5" fill="none" stroke="#e8141c" stroke-width="4.2" stroke-linejoin="round"/>
 <path d="M42 333Q44 341 52 346" fill="none" stroke="#e8141c" stroke-width="2.3"/>
 <path d="M64.2 352.3L48.3 350.6L56 339.3Z" fill="#e8141c"/>
 <path d="M42 333Q34 420 66 466" fill="none" stroke="#e8141c" stroke-width="2.2"/>
 <path d="M76.5 473.5L62.5 470L69.5 461.5Z" fill="#e8141c"/>
</svg>
</body></html>
